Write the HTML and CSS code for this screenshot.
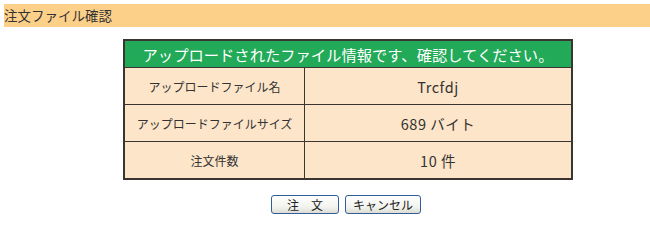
FILE: index.html
```html
<!DOCTYPE html>
<html lang="ja">
<head>
<meta charset="utf-8">
<title>注文ファイル確認</title>
<link rel="stylesheet" href="styles.css">
</head>
<body>
<div class="titlebar">注文ファイル確認</div>
<table class="info">
  <tr><th colspan="2" class="caption">アップロードされたファイル情報です、確認してください。</th></tr>
  <tr><td class="label">アップロードファイル名</td><td class="value">Trcfdj</td></tr>
  <tr><td class="label">アップロードファイルサイズ</td><td class="value">689 バイト</td></tr>
  <tr><td class="label">注文件数</td><td class="value">10 件</td></tr>
</table>
<div class="actions">
  <button class="btn btn-order">注　文</button>
  <button class="btn btn-cancel">キャンセル</button>
</div>
</body>
</html>
```
FILE: styles.css
```css
html, body {
  background: #ffffff;
}
body {
  margin: 4px 0 0 4px;
  font-family: "Noto Sans CJK JP", "DejaVu Sans", sans-serif;
  color: #333333;
}
.titlebar {
  background: #fdd08a;
  height: 23px;
  line-height: 23px;
  font-size: 13.5px;
  color: #333333;
}
.info {
  margin: 12px 0 0 119px;
  width: 450px;
  border-collapse: collapse;
  border: 2px solid #3a3530;
}
.info th, .info td {
  border: 1px solid #3a3530;
  padding: 0;
  text-align: center;
}
.caption {
  background: #22aa58;
  color: #ffffff;
  font-weight: normal;
  font-size: 15.3px;
  height: 26px;
  line-height: 26px;
}
.info td {
  background: #fde5c9;
  font-size: 12px;
  height: 36px;
  color: #333333;
}
.info td.value {
  font-size: 14.5px;
  letter-spacing: 0.5px;
}
.label {
  width: 179px;
}
.actions {
  display: flex;
  gap: 6px;
  margin: 15px 0 0 267px;
}
.btn {
  font-family: "Noto Sans CJK JP", "DejaVu Sans", sans-serif;
  font-size: 12px;
  color: #222222;
  height: 19px;
  line-height: 15px;
  padding: 0;
  border: 1px solid #2f5e9e;
  border-radius: 3px;
  background: linear-gradient(#ffffff, #f1f1ec 70%, #dcdcd4);
}
.btn-order {
  width: 68px;
}
.btn-cancel {
  width: 76px;
}
```
